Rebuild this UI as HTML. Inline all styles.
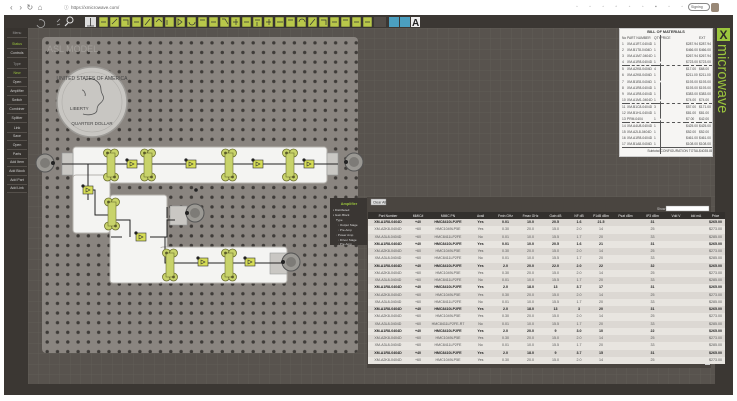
<!DOCTYPE html>
<html><head><meta charset="utf-8"><style>
*{margin:0;padding:0;box-sizing:border-box}
body{width:737px;height:401px;overflow:hidden;background:#fff;font-family:"Liberation Sans",sans-serif;position:relative}
.abs{position:absolute}
table{border-collapse:collapse;table-layout:fixed}
#dt td{height:7.25px;font-size:3.6px;color:#555;text-align:center;white-space:nowrap;overflow:hidden;line-height:7px}
#dt tr:nth-child(odd) td{background:#dcd8d3}
#dt tr:nth-child(even) td{background:#e8e5e0}
#dt tr.b td{color:#222;font-weight:bold}
#bom td{font-size:3.3px;color:#444;height:6.1px;line-height:6px;white-space:nowrap;overflow:hidden}
.sb{position:absolute;left:7px;width:20px;height:9px;font-size:3.5px;color:#cfcfcf;text-align:center;line-height:9px;border-bottom:1px solid #55504b}
</style></head><body>
<div class="abs" style="left:0;top:0;width:737px;height:15px;background:#fff"></div>
<div class="abs" style="left:10px;top:3px;font-size:8px;color:#777">&#8249;&nbsp;&nbsp;&nbsp;&#8250;&nbsp;&nbsp;&#8635;&nbsp;&nbsp;&#8962;</div>
<div class="abs" style="left:64px;top:5px;font-size:4.5px;color:#666">ⓘ&nbsp;&nbsp;https://xmicrowave.com/</div>
<div class="abs" style="left:576px;top:4px;font-size:5px;color:#888;letter-spacing:5px">◦ ◦ ◦ ▫ ◦ ◦ ▪ ◦ ◦</div>
<div class="abs" style="left:688px;top:3px;width:22px;height:8px;border:1px solid #888;border-radius:4px;font-size:3.5px;color:#555;line-height:6px;padding-left:2px">Signing</div>
<div class="abs" style="left:711px;top:3px;width:8px;height:9px;background:#998877;border-radius:2px"></div>

<svg class="abs" style="left:0;top:15px" width="737" height="386" viewBox="0 15 737 386">
<defs>
<pattern id="grid" x="28" y="28" width="10.5" height="10.5" patternUnits="userSpaceOnUse">
<rect width="10.5" height="10.5" fill="#58534e"/><path d="M0 0H10.5M0 0V10.5" stroke="#645f5a" stroke-width="0.7"/>
</pattern>
<pattern id="dots" x="42" y="38" width="10.3" height="9.65" patternUnits="userSpaceOnUse">
<rect width="10.3" height="9.65" fill="#8a8580"/><circle cx="5.2" cy="4.8" r="1.7" fill="#3e3b38"/>
</pattern>
<g id="pad"><circle cx="-3.5" cy="-12" r="4" fill="#c8d36a" stroke="#6d7030" stroke-width="0.8"/><circle cx="3.5" cy="-12" r="4" fill="#c8d36a" stroke="#6d7030" stroke-width="0.8"/><circle cx="-3.5" cy="12" r="4" fill="#c8d36a" stroke="#6d7030" stroke-width="0.8"/><circle cx="3.5" cy="12" r="4" fill="#c8d36a" stroke="#6d7030" stroke-width="0.8"/><rect x="-4" y="-12" width="8" height="24" fill="#c8d36a" stroke="#6d7030" stroke-width="0.6"/><circle cx="-3.5" cy="-12" r="1.4" fill="#5a5a2a"/><circle cx="3.5" cy="12" r="1.4" fill="#5a5a2a"/></g>
<g id="cmp"><rect x="-5" y="-4" width="10" height="8" fill="#d6dd55" stroke="#333" stroke-width="0.6"/><path d="M-2 -2L2 0L-2 2Z" fill="none" stroke="#333" stroke-width="0.6"/><circle cx="-5" cy="-4" r="1.6" fill="#222"/></g>
<g id="mot"><circle r="9" fill="#9a9893" stroke="#555" stroke-width="1"/><circle r="5" fill="#7d7b77"/><circle cx="-8" r="2" fill="#222"/></g>
</defs>
<rect x="0" y="15" width="737" height="386" fill="#fff"/>
<rect x="4" y="15" width="729" height="380" fill="#3b3733"/>
<rect x="28" y="28" width="687" height="356" fill="url(#grid)"/>
<g fill="#b9c84a" stroke="#2d2d2d" stroke-width="0.5">
<rect x="99" y="17" width="9" height="10"/><rect x="110" y="17" width="9" height="10"/><rect x="121" y="17" width="9" height="10"/><rect x="132" y="17" width="9" height="10"/><rect x="143" y="17" width="9" height="10"/><rect x="154" y="17" width="9" height="10"/><rect x="165" y="17" width="9" height="10"/><rect x="176" y="17" width="9" height="10"/><rect x="187" y="17" width="9" height="10"/><rect x="198" y="17" width="9" height="10"/><rect x="209" y="17" width="9" height="10"/><rect x="220" y="17" width="9" height="10"/><rect x="231" y="17" width="9" height="10"/><rect x="242" y="17" width="9" height="10"/><rect x="253" y="17" width="9" height="10"/><rect x="264" y="17" width="9" height="10"/><rect x="275" y="17" width="9" height="10"/><rect x="286" y="17" width="9" height="10"/><rect x="297" y="17" width="9" height="10"/><rect x="308" y="17" width="9" height="10"/><rect x="319" y="17" width="9" height="10"/><rect x="330" y="17" width="9" height="10"/><rect x="341" y="17" width="9" height="10"/><rect x="352" y="17" width="9" height="10"/><rect x="363" y="17" width="9" height="10"/>
</g>
<g stroke="#333" stroke-width="0.7" fill="none">
<path d="M101 22h5M112 24l5-5M123 20h5v5M134 22h5M145 25l5-6M156 22l3-3 3 3M167 20v5M178 19l4 3-4 3zM189 22a3 3 0 1 0 6 0M200 20h5M211 22h5M222 19h3l3 5M233 22h5M236 19v6M244 22h5M255 20h5M257 22v4M266 22h5M269 19v6M277 22h6M288 20h5M299 22a3 3 0 1 1 6 0M310 25l5-6M321 20h5v5M332 22h5M343 20h5M354 22h5M365 22h5"/>
</g>
<rect x="85" y="17" width="11" height="10" fill="#ddd"/><path d="M90.5 18v8M87 26h7" stroke="#333" stroke-width="0.8"/>
<rect x="374" y="17" width="12" height="10" fill="#524d48"/>
<rect x="389" y="17" width="10" height="10" fill="#4b9fc0"/><rect x="400" y="17" width="10" height="10" fill="#4b9fc0"/>
<rect x="411" y="17" width="9" height="10" fill="#eee"/>
<text x="412" y="26" font-size="10" font-weight="bold" fill="#222" font-family="Liberation Sans">A</text>
<circle cx="70" cy="20" r="3" fill="none" stroke="#ddd" stroke-width="1"/><path d="M68 23l-3 3" stroke="#ddd" stroke-width="1.2"/>
<path d="M37 25a4 4 0 1 0 2-5" fill="none" stroke="#aaa" stroke-width="0.8"/>
<path d="M57 22l3-3M57 25l3 -1" stroke="#aaa" stroke-width="0.8"/>
<rect x="6" y="28" width="22" height="165" fill="#37332f"/>
<rect x="42" y="37" width="316" height="316" rx="4" fill="url(#dots)"/>
<text x="47" y="52" font-size="9" fill="#a19d98" font-family="Liberation Sans">ASL MODEL</text>
<circle cx="92" cy="102" r="35" fill="#c8c6c2" stroke="#9c9a96" stroke-width="1.5"/>
<circle cx="92" cy="102" r="30" fill="none" stroke="#b0aeaa" stroke-width="0.6"/>
<path d="M85 80c8-4 16 2 16 10 0 4 4 6 2 10s-6 4-6 10c0 4-8 6-14 4M82 90c2 0 4 4 3 6" fill="none" stroke="#555" stroke-width="0.8"/>
<text x="92" y="80" font-size="5" text-anchor="middle" fill="#444" font-family="Liberation Sans">UNITED STATES OF AMERICA</text>
<text x="70" y="110" font-size="4.5" fill="#444" font-family="Liberation Sans">LIBERTY</text>
<text x="92" y="125" font-size="4.5" text-anchor="middle" fill="#444" font-family="Liberation Sans">QUARTER DOLLAR</text>
<g fill="#f4f4f2" stroke="#b5b2ad" stroke-width="1">
<rect x="73" y="147" width="254" height="36" rx="3"/>
<rect x="73" y="175" width="37" height="58" rx="3"/>
<rect x="110" y="195" width="57" height="88" rx="3"/>
<rect x="160" y="247" width="127" height="36" rx="3"/>
</g>
<rect x="74" y="176" width="35" height="10" fill="#f4f4f2"/>
<rect x="111" y="248" width="55" height="34" fill="#f4f4f2"/>
<g fill="#c9c7c3" stroke="#999" stroke-width="0.6">
<rect x="62" y="153" width="11" height="22"/><rect x="327" y="153" width="11" height="22"/>
<rect x="170" y="206" width="17" height="19"/><rect x="270" y="253" width="17" height="21"/>
</g>
<g stroke="#222" stroke-width="1" fill="none">
<path d="M62 164H338M88 164V200M88 190H95V215H111M111 220H130V237M111 237H122M150 237H167V220H175M165 237V263H287M167 218V207"/>
</g>
<use href="#pad" x="111" y="165"/><use href="#pad" x="148" y="165"/><use href="#pad" x="229" y="165"/><use href="#pad" x="290" y="165"/>
<use href="#pad" x="112" y="214"/><use href="#pad" x="170" y="265"/><use href="#pad" x="229" y="265"/>
<use href="#cmp" x="132" y="164"/><use href="#cmp" x="191" y="164"/><use href="#cmp" x="258" y="164"/><use href="#cmp" x="309" y="164"/>
<use href="#cmp" x="88" y="190"/><use href="#cmp" x="141" y="237"/><use href="#cmp" x="203" y="262"/><use href="#cmp" x="250" y="262"/>
<use href="#mot" x="45" y="163" transform="rotate(180 45 163)"/><use href="#mot" x="354" y="162"/><use href="#mot" x="195" y="213"/><use href="#mot" x="291" y="262"/>
<circle cx="196" cy="190" r="1.8" fill="#222"/>
<rect x="330" y="198" width="38" height="47" fill="#3a3633"/>
<text x="349" y="205" font-size="3.8" text-anchor="middle" fill="#9bc53d" font-family="Liberation Sans" font-weight="bold">Amplifier</text>
<g font-size="3" fill="#ddd" font-family="Liberation Sans">
<text x="333" y="211">▪ Distributed</text><text x="333" y="216">▪ Gain Block</text><text x="336" y="221">Type</text><text x="338" y="226">◦ Output Stage</text><text x="338" y="231">◦ Pre-Amp</text><text x="336" y="236">◦ Power Amp</text><text x="338" y="241">◦ Driver Stage</text><text x="338" y="245">◦ Pre-Amp</text>
</g>
<rect x="367" y="197" width="344" height="171" fill="#4a4540"/>
<rect x="371" y="199" width="15" height="6" fill="#ddd" stroke="#888" stroke-width="0.4"/>
<text x="373" y="203.5" font-size="3.5" fill="#333" font-family="Liberation Sans">Clear All</text>
<text x="657" y="210" font-size="3.3" fill="#ccc" font-family="Liberation Sans">Show</text>
<rect x="666" y="206" width="43" height="5" fill="#fff" stroke="#888" stroke-width="0.4"/>
<rect x="705" y="219" width="5" height="146" fill="#ccc"/>
<rect x="717" y="28" width="13" height="13" fill="#9bc53d"/>
<text x="723.5" y="39" font-size="12" text-anchor="middle" fill="#2f2b28" font-weight="bold" font-family="Liberation Sans">X</text>
<text transform="translate(718 44) rotate(90)" font-size="14.5" fill="#9bc53d" font-family="Liberation Sans">microwave</text>
</svg>

<div class="sb" style="top:29px;color:#999">Menu</div>
<div class="sb" style="top:40px;color:#9bc53d">Status</div>
<div class="sb" style="top:49px">Controls</div>
<div class="sb" style="top:60px;color:#999">Type</div>
<div class="sb" style="top:69px;color:#9bc53d">New</div>
<div class="sb" style="top:78px">Open</div>
<div class="sb" style="top:87px">Amplifier</div>
<div class="sb" style="top:96px">Switch</div>
<div class="sb" style="top:105px">Combiner</div>
<div class="sb" style="top:114px">Splitter</div>
<div class="sb" style="top:124px">Link</div>
<div class="sb" style="top:132px">Save</div>
<div class="sb" style="top:141px">Open</div>
<div class="sb" style="top:150px">Parts</div>
<div class="sb" style="top:158px">Add Item</div>
<div class="sb" style="top:167px">Add Block</div>
<div class="sb" style="top:176px">Add Part</div>
<div class="sb" style="top:184px">Add Link</div>

<div class="abs" style="left:619px;top:28px;width:94px;height:129px;background:#f6f5f3;border:1px solid #ccc;padding:1px 2px">
<div style="font-size:3.8px;font-weight:bold;text-align:center;color:#333;height:5px">BILL OF MATERIALS</div>
<table id="bom" style="width:90px">
<colgroup><col style="width:5px"><col style="width:27px"><col style="width:6px"><col style="width:26px"><col style="width:13px"><col style="width:13px"></colgroup>
<tr><td>No</td><td>PART NUMBER</td><td>QTY</td><td style="border-left:1px dashed #555">PRICE</td><td></td><td>EXT</td></tr>
<tr><td>1</td><td>XM-A1R7-0404D</td><td>1</td><td style="border-left:1px dashed #555"></td><td>$287.94</td><td>$287.94</td></tr>
<tr><td>2</td><td>XM-B1T8-0404D</td><td>1</td><td style="border-left:1px dashed #555"></td><td>$466.00</td><td>$466.00</td></tr>
<tr><td>3</td><td>XM-A1M7-0404D</td><td>1</td><td style="border-left:1px dashed #555"></td><td>$267.94</td><td>$267.94</td></tr>
<tr><td>4</td><td>XM-A1R8-0404D</td><td>1</td><td style="border-left:1px dashed #555"></td><td>$723.00</td><td>$723.00</td></tr>
<tr style="border-top:1px dashed #555"><td>5</td><td>XM-A2K8-0404D</td><td>4</td><td style="border-left:1px dashed #555"></td><td>$17.00</td><td>$68.00</td></tr>
<tr><td>6</td><td>XM-A2K8-0404D</td><td>1</td><td style="border-left:1px dashed #555"></td><td>$211.00</td><td>$211.00</td></tr>
<tr><td>7</td><td>XM-B1E8-0404D</td><td>1</td><td style="border-left:1px dashed #555"></td><td>$193.00</td><td>$193.00</td></tr>
<tr><td>8</td><td>XM-A1R8-0404D</td><td>1</td><td style="border-left:1px dashed #555"></td><td>$193.00</td><td>$193.00</td></tr>
<tr><td>9</td><td>XM-A1R8-0404D</td><td>1</td><td style="border-left:1px dashed #555"></td><td>$383.00</td><td>$383.00</td></tr>
<tr><td>10</td><td>XM-A1M1-0404D</td><td>1</td><td style="border-left:1px dashed #555"></td><td>$74.00</td><td>$74.00</td></tr>
<tr style="border-top:1px dashed #555"><td>11</td><td>XM-B1C8-0404D</td><td>3</td><td style="border-left:1px dashed #555"></td><td>$57.00</td><td>$171.00</td></tr>
<tr><td>12</td><td>XM-B1H1-0404D</td><td>1</td><td style="border-left:1px dashed #555"></td><td>$81.00</td><td>$81.00</td></tr>
<tr><td>13</td><td>PRM-0404</td><td>1</td><td style="border-left:1px dashed #555"></td><td>$7.00</td><td>$42.00</td></tr>
<tr style="border-top:1px dashed #555"><td>14</td><td>XM-A4U8-0404D</td><td>1</td><td style="border-left:1px dashed #555"></td><td>$425.00</td><td>$425.00</td></tr>
<tr><td>15</td><td>XM-A2L8-0404D</td><td>1</td><td style="border-left:1px dashed #555"></td><td>$52.00</td><td>$52.00</td></tr>
<tr><td>16</td><td>XM-A1R8-0404D</td><td>1</td><td style="border-left:1px dashed #555"></td><td>$461.00</td><td>$461.00</td></tr>
<tr><td>17</td><td>XM-B1A8-0404D</td><td>1</td><td style="border-left:1px dashed #555"></td><td>$108.00</td><td>$108.00</td></tr>
<tr style="border-top:1px solid #555"><td></td><td colspan="2" style="text-align:right">Subtotal</td><td style="border-left:1px dashed #555" colspan="2">CONFIGURATION TOTAL</td><td>$4035.88</td></tr>
</table></div>

<table class="abs" style="left:368px;top:212px;width:337px" id="dth">
<colgroup><col style="width:40px"><col style="width:20px"><col style="width:40px"><col style="width:25px"><col style="width:25px"><col style="width:25px"><col style="width:25px"><col style="width:22px"><col style="width:22px"><col style="width:27px"><col style="width:27px"><col style="width:20px"><col style="width:20px"><col style="width:19px"></colgroup>
<tr style="background:#33302d">
<td style="font-size:3.3px;color:#eee;height:7px;text-align:center">Part Number</td><td style="font-size:3.3px;color:#eee;text-align:center">MMIC#</td><td style="font-size:3.3px;color:#eee;text-align:center">MMIC PN</td><td style="font-size:3.3px;color:#eee;text-align:center">Avail</td><td style="font-size:3.3px;color:#eee;text-align:center">Fmin GHz</td><td style="font-size:3.3px;color:#eee;text-align:center">Fmax GHz</td><td style="font-size:3.3px;color:#eee;text-align:center">Gain dB</td><td style="font-size:3.3px;color:#eee;text-align:center">NF dB</td><td style="font-size:3.3px;color:#eee;text-align:center">P1dB dBm</td><td style="font-size:3.3px;color:#eee;text-align:center">Psat dBm</td><td style="font-size:3.3px;color:#eee;text-align:center">IP3 dBm</td><td style="font-size:3.3px;color:#eee;text-align:center">Vdd V</td><td style="font-size:3.3px;color:#eee;text-align:center">Idd mA</td><td style="font-size:3.3px;color:#eee;text-align:center">Price</td></tr>
</table>
<table class="abs" style="left:368px;top:219px;width:337px" id="dt">
<colgroup><col style="width:40px"><col style="width:20px"><col style="width:40px"><col style="width:25px"><col style="width:25px"><col style="width:25px"><col style="width:25px"><col style="width:22px"><col style="width:22px"><col style="width:27px"><col style="width:27px"><col style="width:20px"><col style="width:20px"><col style="width:19px"></colgroup>
<tr class="b"><td>XM-A1R8-0404D</td><td>+40</td><td>HMC8410LP2FE</td><td>Yes</td><td>0.01</td><td>10.0</td><td>20.5</td><td>1.6</td><td>21.5</td><td></td><td>31</td><td></td><td></td><td>$265.00</td></tr>
<tr><td>XM-A2K8-0404D</td><td>+60</td><td>HMC1049LP5E</td><td>Yes</td><td>0.30</td><td>20.0</td><td>15.0</td><td>2.0</td><td>14</td><td></td><td>25</td><td></td><td></td><td>$273.00</td></tr>
<tr><td>XM-A3L8-0404D</td><td>+60</td><td>HMC8411LP2FE</td><td>No</td><td>0.01</td><td>10.0</td><td>15.5</td><td>1.7</td><td>20</td><td></td><td>33</td><td></td><td></td><td>$285.00</td></tr>
<tr class="b"><td>XM-A1R8-0404D</td><td>+40</td><td>HMC8410LP2FE</td><td>Yes</td><td>0.01</td><td>10.0</td><td>20.5</td><td>1.6</td><td>21</td><td></td><td>31</td><td></td><td></td><td>$265.00</td></tr>
<tr><td>XM-A2K8-0404D</td><td>+60</td><td>HMC1049LP5E</td><td>Yes</td><td>0.30</td><td>20.0</td><td>15.0</td><td>2.0</td><td>14</td><td></td><td>25</td><td></td><td></td><td>$273.00</td></tr>
<tr><td>XM-A3L8-0404D</td><td>+60</td><td>HMC8411LP2FE</td><td>No</td><td>0.01</td><td>10.0</td><td>15.5</td><td>1.7</td><td>20</td><td></td><td>33</td><td></td><td></td><td>$285.00</td></tr>
<tr class="b"><td>XM-A1R8-0404D</td><td>+40</td><td>HMC8410LP2FE</td><td>Yes</td><td>2.0</td><td>20.0</td><td>22.0</td><td>2.0</td><td>22</td><td></td><td>32</td><td></td><td></td><td>$265.00</td></tr>
<tr><td>XM-A2K8-0404D</td><td>+60</td><td>HMC1049LP5E</td><td>Yes</td><td>0.30</td><td>20.0</td><td>15.0</td><td>2.0</td><td>14</td><td></td><td>25</td><td></td><td></td><td>$273.00</td></tr>
<tr><td>XM-A3L8-0404D</td><td>+60</td><td>HMC8411LP2FE</td><td>No</td><td>0.01</td><td>10.0</td><td>15.5</td><td>1.7</td><td>20</td><td></td><td>33</td><td></td><td></td><td>$285.00</td></tr>
<tr class="b"><td>XM-A1R8-0404D</td><td>+40</td><td>HMC8410LP2FE</td><td>Yes</td><td>2.0</td><td>18.0</td><td>13</td><td>3.7</td><td>17</td><td></td><td>31</td><td></td><td></td><td>$265.00</td></tr>
<tr><td>XM-A2K8-0404D</td><td>+60</td><td>HMC1049LP5E</td><td>Yes</td><td>0.30</td><td>20.0</td><td>15.0</td><td>2.0</td><td>14</td><td></td><td>25</td><td></td><td></td><td>$273.00</td></tr>
<tr><td>XM-A3L8-0404D</td><td>+60</td><td>HMC8411LP2FE</td><td>No</td><td>0.01</td><td>10.0</td><td>15.5</td><td>1.7</td><td>20</td><td></td><td>33</td><td></td><td></td><td>$285.00</td></tr>
<tr class="b"><td>XM-A1R8-0404D</td><td>+40</td><td>HMC8410LP2FE</td><td>Yes</td><td>2.0</td><td>18.0</td><td>13</td><td>3</td><td>20</td><td></td><td>31</td><td></td><td></td><td>$265.00</td></tr>
<tr><td>XM-A2K8-0404D</td><td>+60</td><td>HMC1049LP5E</td><td>Yes</td><td>0.30</td><td>20.0</td><td>15.0</td><td>2.0</td><td>14</td><td></td><td>25</td><td></td><td></td><td>$273.00</td></tr>
<tr><td>XM-A3L8-0404D</td><td>+60</td><td>HMC8411LP2FE-R7</td><td>No</td><td>0.01</td><td>10.0</td><td>15.5</td><td>1.7</td><td>20</td><td></td><td>33</td><td></td><td></td><td>$285.00</td></tr>
<tr class="b"><td>XM-A1R8-0404D</td><td>+40</td><td>HMC8410LP2FE</td><td>Yes</td><td>2.0</td><td>20.0</td><td>9</td><td>3.0</td><td>10</td><td></td><td>22</td><td></td><td></td><td>$265.00</td></tr>
<tr><td>XM-A2K8-0404D</td><td>+60</td><td>HMC1049LP5E</td><td>Yes</td><td>0.30</td><td>20.0</td><td>15.0</td><td>2.0</td><td>14</td><td></td><td>25</td><td></td><td></td><td>$273.00</td></tr>
<tr><td>XM-A3L8-0404D</td><td>+60</td><td>HMC8411LP2FE</td><td>No</td><td>0.01</td><td>10.0</td><td>15.5</td><td>1.7</td><td>20</td><td></td><td>33</td><td></td><td></td><td>$285.00</td></tr>
<tr class="b"><td>XM-A1R8-0404D</td><td>+40</td><td>HMC8410LP2FE</td><td>Yes</td><td>2.0</td><td>18.0</td><td>9</td><td>3.7</td><td>15</td><td></td><td>31</td><td></td><td></td><td>$265.00</td></tr>
<tr><td>XM-A2K8-0404D</td><td>+60</td><td>HMC1049LP5E</td><td>Yes</td><td>0.30</td><td>20.0</td><td>15.0</td><td>2.0</td><td>14</td><td></td><td>25</td><td></td><td></td><td>$273.00</td></tr>
</table>
</body></html>
